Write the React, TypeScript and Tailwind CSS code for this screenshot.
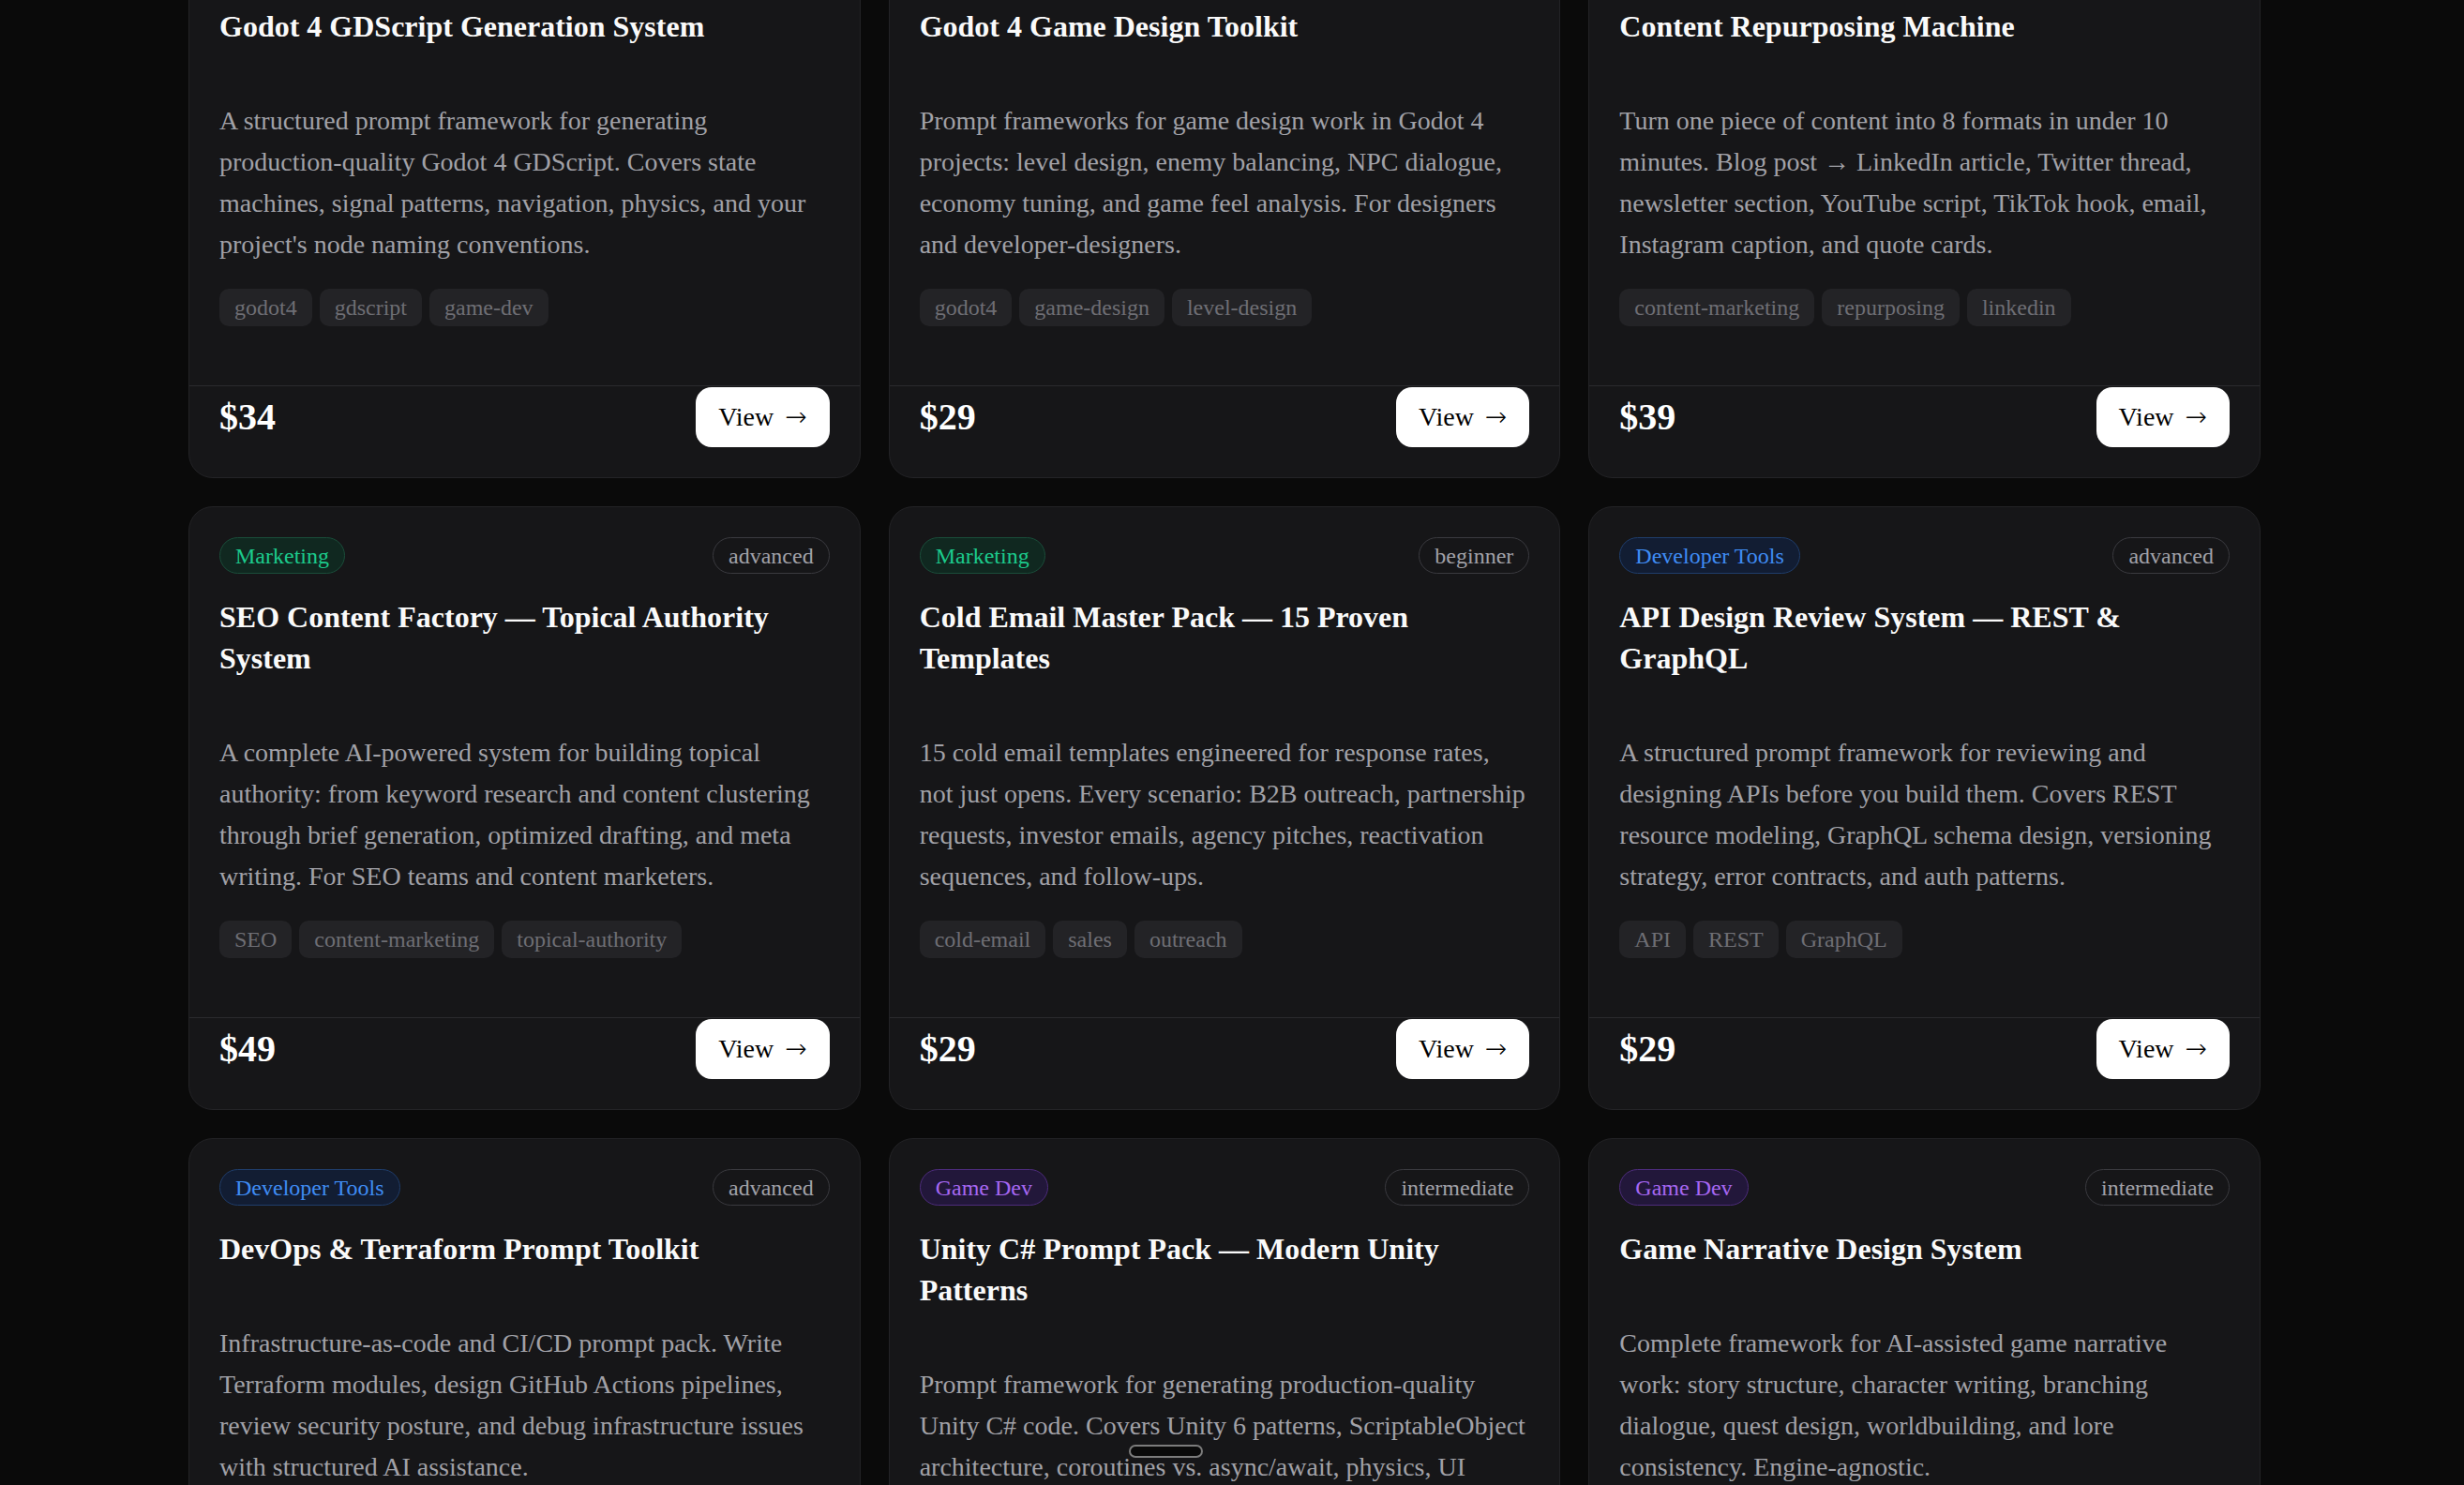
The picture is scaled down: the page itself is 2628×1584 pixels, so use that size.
type Category = "Marketing" | "Developer Tools" | "Game Dev";

type Product = {
  category: Category;
  level: string;
  title: string;
  description: string;
  tags: string[];
  price: number;
};

const products: Product[] = [
  {
    category: "Game Dev",
    level: "intermediate",
    title: "Godot 4 GDScript Generation System",
    description:
      "A structured prompt framework for generating production-quality Godot 4 GDScript. Covers state machines, signal patterns, navigation, physics, and your project's node naming conventions.",
    tags: ["godot4", "gdscript", "game-dev"],
    price: 34,
  },
  {
    category: "Game Dev",
    level: "intermediate",
    title: "Godot 4 Game Design Toolkit",
    description:
      "Prompt frameworks for game design work in Godot 4 projects: level design, enemy balancing, NPC dialogue, economy tuning, and game feel analysis. For designers and developer-designers.",
    tags: ["godot4", "game-design", "level-design"],
    price: 29,
  },
  {
    category: "Marketing",
    level: "beginner",
    title: "Content Repurposing Machine",
    description:
      "Turn one piece of content into 8 formats in under 10 minutes. Blog post → LinkedIn article, Twitter thread, newsletter section, YouTube script, TikTok hook, email, Instagram caption, and quote cards.",
    tags: ["content-marketing", "repurposing", "linkedin"],
    price: 39,
  },
  {
    category: "Marketing",
    level: "advanced",
    title: "SEO Content Factory — Topical Authority System",
    description:
      "A complete AI-powered system for building topical authority: from keyword research and content clustering through brief generation, optimized drafting, and meta writing. For SEO teams and content marketers.",
    tags: ["SEO", "content-marketing", "topical-authority"],
    price: 49,
  },
  {
    category: "Marketing",
    level: "beginner",
    title: "Cold Email Master Pack — 15 Proven Templates",
    description:
      "15 cold email templates engineered for response rates, not just opens. Every scenario: B2B outreach, partnership requests, investor emails, agency pitches, reactivation sequences, and follow-ups.",
    tags: ["cold-email", "sales", "outreach"],
    price: 29,
  },
  {
    category: "Developer Tools",
    level: "advanced",
    title: "API Design Review System — REST & GraphQL",
    description:
      "A structured prompt framework for reviewing and designing APIs before you build them. Covers REST resource modeling, GraphQL schema design, versioning strategy, error contracts, and auth patterns.",
    tags: ["API", "REST", "GraphQL"],
    price: 29,
  },
  {
    category: "Developer Tools",
    level: "advanced",
    title: "DevOps & Terraform Prompt Toolkit",
    description:
      "Infrastructure-as-code and CI/CD prompt pack. Write Terraform modules, design GitHub Actions pipelines, review security posture, and debug infrastructure issues with structured AI assistance.",
    tags: ["devops", "terraform", "ci-cd"],
    price: 39,
  },
  {
    category: "Game Dev",
    level: "intermediate",
    title: "Unity C# Prompt Pack — Modern Unity Patterns",
    description:
      "Prompt framework for generating production-quality Unity C# code. Covers Unity 6 patterns, ScriptableObject architecture, coroutines vs. async/await, physics, UI Toolkit, and performance profiling.",
    tags: ["unity", "csharp", "game-dev"],
    price: 34,
  },
  {
    category: "Game Dev",
    level: "intermediate",
    title: "Game Narrative Design System",
    description:
      "Complete framework for AI-assisted game narrative work: story structure, character writing, branching dialogue, quest design, worldbuilding, and lore consistency. Engine-agnostic.",
    tags: ["narrative", "game-writing", "dialogue"],
    price: 29,
  },
];

const categoryStyles: Record<Category, string> = {
  Marketing: "border-[#1a4d3a] bg-[#102820] text-[#1ccb8c]",
  "Developer Tools": "border-[#1f3d6b] bg-[#121d33] text-[#3f8cf4]",
  "Game Dev": "border-[#4d2c7c] bg-[#22173a] text-[#a667f2]",
};

function ProductCard({ product }: { product: Product }) {
  return (
    <div className="flex flex-col rounded-[26px] border border-[#232326] bg-[#161618]">
      <div className="flex flex-1 flex-col px-8 pt-8">
        <div className="mb-6 flex items-center justify-between">
          <span
            className={`flex h-[39px] items-center rounded-full border px-4 text-[24px] ${categoryStyles[product.category]}`}
          >
            {product.category}
          </span>
          <span className="flex h-[39px] items-center rounded-full border border-[#3a3a3f] px-4 text-[24px] text-[#a1a1a8]">
            {product.level}
          </span>
        </div>
        <h3 className="mb-[57px] text-[32px] font-bold leading-[44px] text-[#fafafa]">{product.title}</h3>
        <p className="mb-[25px] text-[28px] leading-[44px] text-[#a1a1a7]">{product.description}</p>
        <div className="mb-[63px] flex flex-wrap gap-2">
          {product.tags.map((tag) => (
            <span
              key={tag}
              className="rounded-[10px] bg-[#232326] px-4 py-1 text-[24px] leading-8 text-[#6e6e74]"
            >
              {tag}
            </span>
          ))}
        </div>
      </div>
      <div className="mt-auto flex items-center justify-between border-t border-[#2a2a2d] px-8 pb-8 pt-px">
        <span className="text-[40px] font-bold text-white">${product.price}</span>
        <button className="rounded-[17px] bg-white px-6 py-3 text-[28px] leading-10 text-black">
          View <span className="ml-[5px] font-['DejaVu_Sans',sans-serif] font-light">→</span>
        </button>
      </div>
    </div>
  );
}

export default function App() {
  return (
    <div className="relative h-screen overflow-hidden bg-[#0a0a0a] pr-4 font-['Liberation_Serif',serif]">
      <div className="mx-auto -mt-[90px] grid w-[2210px] grid-cols-3 gap-[30px]">
        {products.map((product) => (
          <ProductCard key={product.title} product={product} />
        ))}
      </div>
      <div className="fixed left-[1204px] top-[1541px] h-[14px] w-[79px] rounded-full border-2 border-[#7c7c7c] bg-[#0a0a0a]" />
    </div>
  );
}
